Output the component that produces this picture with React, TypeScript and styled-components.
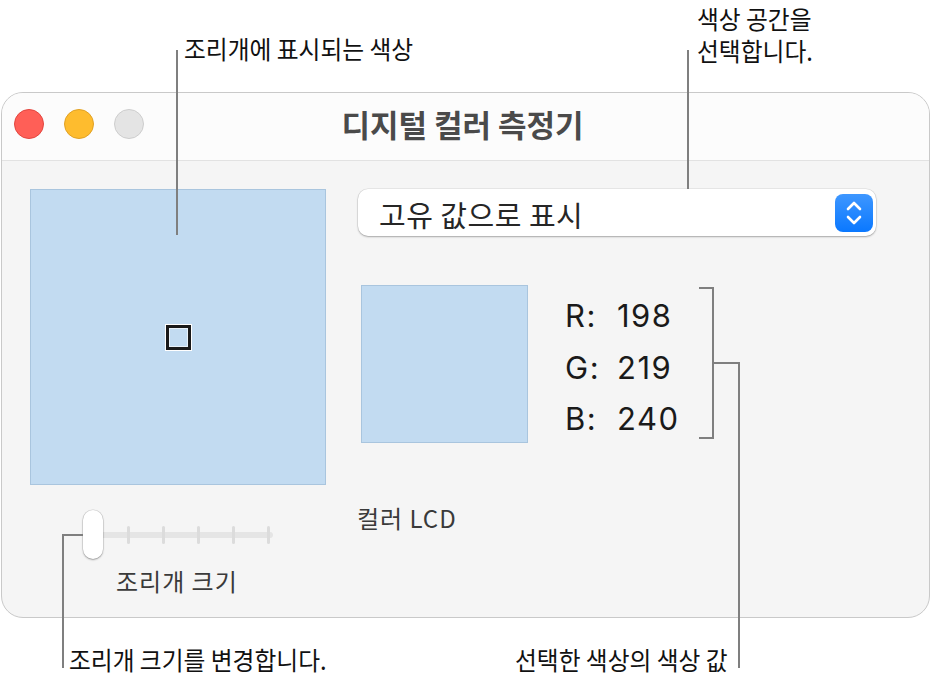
import styled, { createGlobalStyle } from "styled-components";

const KR = `"Noto Sans CJK KR", "Noto Sans", sans-serif`;

const GlobalStyle = createGlobalStyle`
  * { box-sizing: border-box; }
  html, body { margin: 0; padding: 0; background: #ffffff; }
  body { font-family: Inter, "Noto Sans CJK KR", sans-serif; color: #1d1d1f; }
`;

const Page = styled.div`
  position: relative;
  width: 931px;
  height: 681px;
  padding: 92px 1px 0;
  background: #ffffff;
  overflow: hidden;
`;

const Window = styled.div`
  width: 929px;
  height: 526px;
  display: flex;
  flex-direction: column;
  border: 1px solid #c9c9c9;
  border-radius: 22px;
  background: #f5f5f5;
  overflow: hidden;
`;

const TitleBar = styled.div`
  flex: none;
  height: 68px;
  display: grid;
  grid-template-columns: 1fr auto 1fr;
  align-items: center;
  padding: 0 12px 6px;
  background: #fcfcfc;
  border-bottom: 1px solid #e2e2e2;
`;

const Lights = styled.div`
  display: flex;
  gap: 20px;
`;

const Light = styled.span<{ $fill: string; $edge: string }>`
  width: 30px;
  height: 30px;
  border-radius: 50%;
  background: ${(p) => p.$fill};
  border: 1px solid ${(p) => p.$edge};
`;

const Title = styled.h1`
  margin: 0 6px 0 0;
  font: 700 31px/1 ${KR};
  color: #4a4a4a;
`;

const Content = styled.div`
  flex: 1;
  display: flex;
  padding: 28px 0 0 28px;
`;

const LeftPane = styled.div`
  width: 296px;
  display: flex;
  flex-direction: column;
`;

const Loupe = styled.div`
  width: 296px;
  height: 296px;
  display: flex;
  align-items: center;
  justify-content: center;
  background: #c2dbf1;
  border: 1px solid #a9c5de;
`;

const Aperture = styled.div`
  width: 25px;
  height: 25px;
  border: 3px solid #1a1a1a;
  box-shadow: 0 0 0 1px #ffffff, inset 0 0 0 1px rgba(255, 255, 255, 0.6);
`;

const SizeSlider = styled.div`
  position: relative;
  width: 190px;
  height: 49px;
  margin: 25px 0 0 53px;
  display: flex;
  align-items: center;
`;

const Track = styled.div`
  width: 185px;
  height: 6px;
  margin-left: 5px;
  padding: 0 3px 0 4px;
  display: flex;
  align-items: center;
  justify-content: space-between;
  background: #e5e5e5;
  border-radius: 3px;
`;

const Tick = styled.span`
  width: 3px;
  height: 18px;
  background: #dcdcdc;
  border-radius: 1.5px;
`;

const Thumb = styled.div`
  position: absolute;
  left: 0;
  top: 0;
  width: 20px;
  height: 49px;
  border-radius: 10px;
  background: #ffffff;
  box-shadow: 0 1px 2px rgba(0, 0, 0, 0.3), 0 0 0 0.5px rgba(0, 0, 0, 0.15);
`;

const ControlLabel = styled.div<{ $top: number; $left: number }>`
  margin: ${(p) => p.$top}px 0 0 ${(p) => p.$left}px;
  font: 400 24px/30px ${KR};
  letter-spacing: 1px;
  color: #3a3a3a;
  white-space: nowrap;
`;

const RightPane = styled.div`
  width: 518px;
  margin-left: 32px;
  display: flex;
  flex-direction: column;
`;

const Popup = styled.div`
  height: 47px;
  display: flex;
  align-items: center;
  padding: 0 3px 0 21px;
  background: #ffffff;
  border-radius: 10px;
  box-shadow: 0 1px 2px rgba(0, 0, 0, 0.28), 0 0 0 0.5px rgba(0, 0, 0, 0.1);
`;

const PopupText = styled.span`
  flex: 1;
  margin-top: 4px;
  font: 400 29px/1 ${KR};
  letter-spacing: 0.5px;
  color: #262626;
`;

const Stepper = styled.span`
  width: 38px;
  height: 38px;
  display: flex;
  align-items: center;
  justify-content: center;
  border-radius: 8px;
  background: linear-gradient(#3e97ff, #0a78ff);
`;

const Readout = styled.div`
  display: flex;
  margin: 49px 0 0 3px;
`;

const Swatch = styled.div`
  width: 167px;
  height: 158px;
  background: #c2dbf1;
  border: 1px solid #a9c5de;
`;

const Values = styled.div`
  display: grid;
  grid-template-columns: 32px auto;
  column-gap: 20px;
  margin: 5px 0 0 37px;
  font: 400 31px/51.5px Inter, "Noto Sans CJK KR", sans-serif;
  letter-spacing: 1.5px;
  color: #1a1a1a;
`;

const Channel = styled.span`
  text-align: right;
`;

const Leaders = styled.svg`
  position: absolute;
  left: 0;
  top: 0;
  pointer-events: none;
`;

const Callout = styled.div<{ $x: number; $y: number }>`
  position: absolute;
  left: ${(p) => p.$x}px;
  top: ${(p) => p.$y}px;
  font: 400 25px/30px ${KR};
  color: #111111;
  white-space: nowrap;
  transform: scaleX(0.95);
  transform-origin: left top;
`;

const channels = [
  { name: "R:", value: 198 },
  { name: "G:", value: 219 },
  { name: "B:", value: 240 },
];

export default function App(): JSX.Element {
  return (
    <>
      <GlobalStyle />
      <Page>
        <Window>
          <TitleBar>
            <Lights>
              <Light $fill="#ff5f57" $edge="#e2463f" />
              <Light $fill="#febc2e" $edge="#e0a125" />
              <Light $fill="#e4e4e4" $edge="#cdcdcd" />
            </Lights>
            <Title>디지털 컬러 측정기</Title>
          </TitleBar>
          <Content>
            <LeftPane>
              <Loupe>
                <Aperture />
              </Loupe>
              <SizeSlider>
                <Track>
                  {Array.from({ length: 6 }).map((_, idx) => (
                    <Tick key={`tick ${idx}`} />
                  ))}
                </Track>
                <Thumb />
              </SizeSlider>
              <ControlLabel $top={7} $left={86}>
                조리개 크기
              </ControlLabel>
            </LeftPane>
            <RightPane>
              <Popup>
                <PopupText>고유 값으로 표시</PopupText>
                <Stepper>
                  <svg width="20" height="28" viewBox="0 0 20 28" fill="none">
                    <path d="M4 10 L10 4 L16 10" stroke="#fff" strokeWidth="2.6" strokeLinecap="round" strokeLinejoin="round" />
                    <path d="M4 18 L10 24 L16 18" stroke="#fff" strokeWidth="2.6" strokeLinecap="round" strokeLinejoin="round" />
                  </svg>
                </Stepper>
              </Popup>
              <Readout>
                <Swatch />
                <Values>
                  {channels.map((c) => [
                    <Channel key={c.name}>{c.name}</Channel>,
                    <span key={`${c.name} value`}>{c.value}</span>,
                  ])}
                </Values>
              </Readout>
              <ControlLabel $top={58} $left={-1}>
                컬러 LCD
              </ControlLabel>
            </RightPane>
          </Content>
        </Window>

        <Leaders width="931" height="681" viewBox="0 0 931 681">
          <g stroke="#7f7f7f" strokeWidth="2" fill="none">
            <path d="M177 50 V235" />
            <path d="M688 50 V189" />
            <path d="M699 288 H713 V438 H699" />
            <path d="M713 363 H739 V668" />
            <path d="M83 535 H63 V668" />
          </g>
        </Leaders>
        <Callout $x={184} $y={33}>조리개에 표시되는 색상</Callout>
        <Callout $x={697} $y={3}>색상 공간을</Callout>
        <Callout $x={697} $y={35}>선택합니다.</Callout>
        <Callout $x={69} $y={644}>조리개 크기를 변경합니다.</Callout>
        <Callout $x={515} $y={644}>선택한 색상의 색상 값</Callout>
      </Page>
    </>
  );
}
